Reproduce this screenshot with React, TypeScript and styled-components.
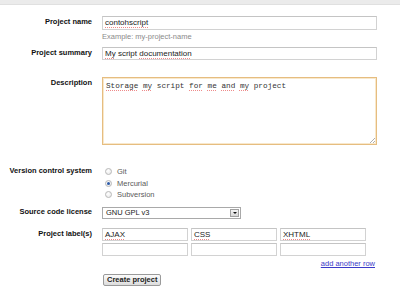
import styled, { createGlobalStyle } from "styled-components";

const GlobalStyle = createGlobalStyle`
  body {
    margin: 0;
    background: #fff;
    font-family: "Liberation Sans", Arial, sans-serif;
  }
`;

const TopBar = styled.div`
  height: 4px;
  background: #ebebeb;
  border-bottom: 1px solid #e0e0e0;
`;

const Form = styled.div`
  display: flex;
  flex-direction: column;
  width: 400px;
`;

const Row = styled.div<{ $top: number }>`
  display: grid;
  grid-template-columns: 92px 275px;
  column-gap: 10px;
  align-items: start;
  margin-top: ${(p) => p.$top}px;
`;

const Label = styled.div<{ $pad?: number }>`
  text-align: right;
  font-weight: bold;
  font-size: 7.5px;
  line-height: 10px;
  color: #111;
  padding-top: ${(p) => p.$pad ?? 1}px;
  white-space: nowrap;
`;

const Field = styled.div`
  display: flex;
  flex-direction: column;
`;

const TextBox = styled.div<{ $width: number; $height?: number }>`
  box-sizing: border-box;
  width: ${(p) => p.$width}px;
  height: ${(p) => p.$height ?? 14}px;
  border: 1px solid #d2d2d2;
  border-top-color: #c4c4c4;
  padding: 0 2px;
  font-size: 8px;
  line-height: 12px;
  color: #222;
  white-space: nowrap;
  overflow: hidden;
`;

const Misspelt = styled.span`
  text-decoration: underline dotted #ee8a8a;
  text-decoration-thickness: 1px;
  text-underline-offset: 1.5px;
`;

const Hint = styled.div`
  margin-top: 2px;
  font-size: 7.5px;
  line-height: 9px;
  color: #8a8a8a;
`;

const TextArea = styled.div`
  position: relative;
  box-sizing: border-box;
  width: 275px;
  height: 68px;
  border: 1px solid #e6bd80;
  box-shadow: inset 0 0 0 1px #f8e8cc;
  padding: 3px 3px;
  font-family: "Liberation Mono", "Courier New", monospace;
  font-size: 7.7px;
  line-height: 10px;
  color: #333;
`;

const Grip = styled.svg`
  position: absolute;
  right: 1px;
  bottom: 1px;
`;

const RadioGroup = styled.div`
  display: flex;
  flex-direction: column;
  padding-left: 3px;
  padding-top: 1px;
`;

const RadioRow = styled.div`
  display: flex;
  align-items: center;
  gap: 5px;
  height: 11.5px;
  font-size: 7.5px;
  color: #5a5a5a;
`;

const RadioDot = styled.span<{ $checked?: boolean }>`
  box-sizing: border-box;
  width: 7px;
  height: 7px;
  border-radius: 50%;
  border: 1px solid #b8b8b8;
  background: radial-gradient(circle at 40% 35%, #fff 0%, #e6e6e6 100%);
  display: flex;
  align-items: center;
  justify-content: center;

  &::after {
    content: "";
    width: 3px;
    height: 3px;
    border-radius: 50%;
    background: ${(p) => (p.$checked ? "#2c5aa8" : "transparent")};
  }
`;

const Select = styled.div`
  box-sizing: border-box;
  width: 139px;
  height: 12px;
  border: 1px solid #a9a9a9;
  display: flex;
  align-items: center;
  justify-content: space-between;
  padding: 0 1px 0 3px;
  font-size: 7.5px;
  color: #222;
`;

const SelectArrow = styled.span`
  box-sizing: border-box;
  width: 9px;
  height: 8px;
  border: 1px solid #a0a0a0;
  background: linear-gradient(#f4f4f4, #d8d8d8);
  display: flex;
  align-items: center;
  justify-content: center;

  &::after {
    content: "";
    border-left: 2px solid transparent;
    border-right: 2px solid transparent;
    border-top: 2px solid #111;
  }
`;

const LabelGrid = styled.div`
  display: grid;
  grid-template-columns: repeat(3, 86px);
  column-gap: 3px;
  row-gap: 2px;
`;

const AddRow = styled.a`
  align-self: flex-end;
  margin-top: 3px;
  margin-right: 2px;
  font-size: 7.5px;
  line-height: 9px;
  color: #3a3ac8;
  text-decoration: underline;
  cursor: pointer;
`;

const ButtonRow = styled.div`
  display: flex;
  padding-left: 103px;
  margin-top: 6px;
`;

const Button = styled.button`
  box-sizing: border-box;
  height: 12px;
  padding: 0 3px;
  border: 1px solid #9a9a9a;
  border-radius: 2px;
  background: linear-gradient(#fbfbfb, #dcdcdc);
  font-family: "Liberation Sans", Arial, sans-serif;
  font-weight: bold;
  font-size: 7.5px;
  line-height: 10px;
  color: #222;
`;

const App = (): JSX.Element => {
  return (
    <>
      <GlobalStyle />
      <TopBar />
      <Form>
        <Row $top={11}>
          <Label $pad={1}>Project name</Label>
          <Field>
            <TextBox $width={275}>
              <Misspelt>contohscript</Misspelt>
            </TextBox>
            <Hint>Example: my-project-name</Hint>
          </Field>
        </Row>
        <Row $top={6}>
          <Label $pad={1}>Project summary</Label>
          <TextBox $width={275} $height={13}>
            <Misspelt>My</Misspelt> script <Misspelt>documentation</Misspelt>
          </TextBox>
        </Row>
        <Row $top={17}>
          <Label $pad={1}>Description</Label>
          <TextArea>
            <Misspelt>Storage</Misspelt> <Misspelt>my</Misspelt> script{" "}
            <Misspelt>for</Misspelt> <Misspelt>me</Misspelt>{" "}
            <Misspelt>and</Misspelt> <Misspelt>my</Misspelt> project
            <Grip width="6" height="6" viewBox="0 0 6 6">
              <path d="M6 1 L1 6 M6 4 L4 6" stroke="#9a9a9a" strokeWidth="0.8" />
            </Grip>
          </TextArea>
        </Row>
        <Row $top={20}>
          <Label $pad={1}>Version control system</Label>
          <RadioGroup>
            <RadioRow>
              <RadioDot />
              Git
            </RadioRow>
            <RadioRow>
              <RadioDot $checked />
              Mercurial
            </RadioRow>
            <RadioRow>
              <RadioDot />
              Subversion
            </RadioRow>
          </RadioGroup>
        </Row>
        <Row $top={6}>
          <Label $pad={0}>Source code license</Label>
          <Select>
            GNU GPL v3
            <SelectArrow />
          </Select>
        </Row>
        <Row $top={9}>
          <Label $pad={1}>Project label(s)</Label>
          <Field>
            <LabelGrid>
              <TextBox $width={86} $height={13}>
                <Misspelt>AJAX</Misspelt>
              </TextBox>
              <TextBox $width={86} $height={13}>
                <Misspelt>CSS</Misspelt>
              </TextBox>
              <TextBox $width={86} $height={13}>
                <Misspelt>XHTML</Misspelt>
              </TextBox>
              <TextBox $width={86} $height={13} />
              <TextBox $width={86} $height={13} />
              <TextBox $width={86} $height={13} />
            </LabelGrid>
            <AddRow>add another row</AddRow>
          </Field>
        </Row>
        <ButtonRow>
          <Button>Create project</Button>
        </ButtonRow>
      </Form>
    </>
  );
};

export default App;
